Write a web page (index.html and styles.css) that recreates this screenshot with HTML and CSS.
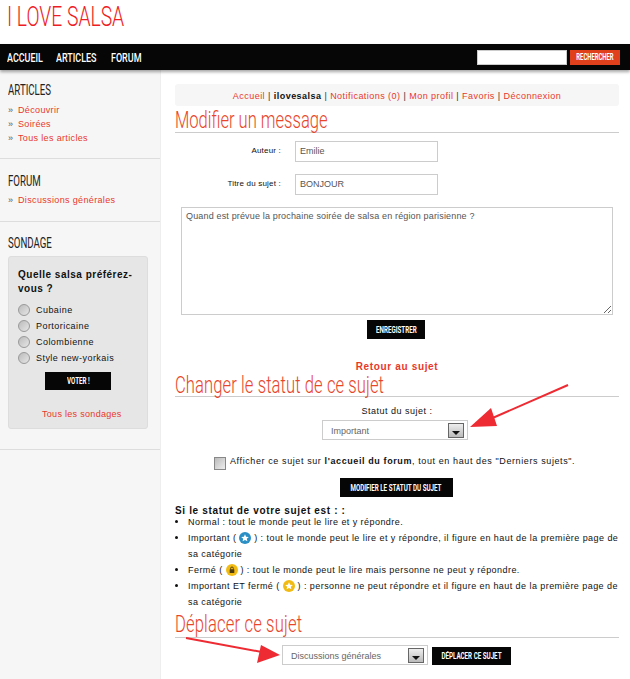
FILE: index.html
```html
<!DOCTYPE html>
<html lang="en">
<head>
  <meta charset="UTF-8" />
  <title>I Love Salsa</title>
  <link rel="stylesheet" href="styles.css">
</head>
<body>
  <header class="top">
    <div class="logo"><span class="narrow">I LOVE SALSA</span></div>
  </header>
  <nav class="nav">
    <a href="#"><span class="narrow">ACCUEIL</span></a>
    <a href="#"><span class="narrow">ARTICLES</span></a>
    <a href="#"><span class="narrow">FORUM</span></a>
    <form class="search">
      <input type="text" />
      <button class="btn" type="button"><span class="narrow">RECHERCHER</span></button>
    </form>
  </nav>
  <div class="page">
    <aside class="side">
      <section class="side-block">
        <h3><span class="narrow">ARTICLES</span></h3>
        <ul>
          <li><a href="#">Découvrir</a></li>
          <li><a href="#">Soirées</a></li>
          <li><a href="#">Tous les articles</a></li>
        </ul>
      </section>
      <section class="side-block forum">
        <h3><span class="narrow">FORUM</span></h3>
        <ul>
          <li><a href="#">Discussions générales</a></li>
        </ul>
      </section>
      <section class="side-block poll">
        <h3><span class="narrow">SONDAGE</span></h3>
        <div class="poll-box">
          <p class="question">Quelle salsa préférez-vous ?</p>
          <label><input type="radio" name="salsa" /> Cubaine</label>
          <label><input type="radio" name="salsa" /> Portoricaine</label>
          <label><input type="radio" name="salsa" /> Colombienne</label>
          <label><input type="radio" name="salsa" /> Style new-yorkais</label>
          <button class="btn vote" type="button"><span class="narrow">VOTER !</span></button>
          <a class="all-polls" href="#">Tous les sondages</a>
        </div>
      </section>
    </aside>
    <main class="main">
      <div class="crumbs">
        <a href="#">Accueil</a> | <b>ilovesalsa</b> | <a href="#">Notifications (0)</a> | <a href="#">Mon profil</a> | <a href="#">Favoris</a> | <a href="#">Déconnexion</a>
      </div>
      <h1><span class="narrow">Modifier un message</span></h1>
      <div class="field first">
        <label>Auteur :</label>
        <input type="text" value="Emilie" />
      </div>
      <div class="field second">
        <label>Titre du sujet :</label>
        <input type="text" value="BONJOUR" />
      </div>
      <textarea class="message">Quand est prévue la prochaine soirée de salsa en région parisienne ?</textarea>
      <div class="center save"><button class="btn" type="button"><span class="narrow">ENREGISTRER</span></button></div>
      <div class="center back"><a href="#">Retour au sujet</a></div>

      <h1 class="status-title"><span class="narrow">Changer le statut de ce sujet</span></h1>
      <div class="center status-label">Statut du sujet :</div>
      <div class="center">
        <div class="select">
          <select><option>Important</option></select>
          <i class="select-btn"></i>
        </div>
      </div>
      <div class="check">
        <input type="checkbox" />
        <span>Afficher ce sujet sur <b>l'accueil du forum</b>, tout en haut des "Derniers sujets".</span>
      </div>
      <div class="center"><button class="btn status-btn" type="button"><span class="narrow">MODIFIER LE STATUT DU SUJET</span></button></div>

      <p class="legend-title">Si le statut de votre sujet est : :</p>
      <ul class="legend">
        <li>Normal : tout le monde peut le lire et y répondre.</li>
        <li>Important (
          <svg class="badge" viewBox="0 0 12 12"><circle cx="6" cy="6" r="6" fill="#2a8fc4"/><path d="M6 2.2l1.1 2.5 2.7.2-2 1.8.6 2.6L6 7.9 3.6 9.3l.6-2.6-2-1.8 2.7-.2z" fill="#fff"/></svg>
          ) : tout le monde peut le lire et y répondre, il figure en haut de la première page de<br>sa catégorie</li>
        <li>Fermé (
          <svg class="badge" viewBox="0 0 12 12"><circle cx="6" cy="6" r="6" fill="#f2bb13"/><rect x="3.7" y="5.3" width="4.6" height="3.6" rx=".5" fill="#4a3a10"/><path d="M4.6 5.5V4.4a1.4 1.4 0 0 1 2.8 0v1.1" fill="none" stroke="#4a3a10" stroke-width=".9"/></svg>
          ) : tout le monde peut le lire mais personne ne peut y répondre.</li>
        <li>Important ET fermé (
          <svg class="badge" viewBox="0 0 12 12"><circle cx="6" cy="6" r="6" fill="#f2bb13"/><path d="M6 2.2l1.1 2.5 2.7.2-2 1.8.6 2.6L6 7.9 3.6 9.3l.6-2.6-2-1.8 2.7-.2z" fill="#fff"/></svg>
          ) : personne ne peut répondre et il figure en haut de la première page de<br>sa catégorie</li>
      </ul>

      <h1 class="move-title"><span class="narrow">Déplacer ce sujet</span></h1>
      <div class="move">
        <div class="select">
          <select><option>Discussions générales</option></select>
          <i class="select-btn"></i>
        </div>
        <button class="btn move-btn" type="button"><span class="narrow">DÉPLACER CE SUJET</span></button>
      </div>
    </main>
  </div>

  <svg class="arrow arrow-status" width="110" height="56" viewBox="0 0 110 56">
    <path d="M104 3L24 38" stroke="#ee2a32" stroke-width="2" fill="none"/>
    <path d="M6 45L27 26l6 18z" fill="#ee2a32"/>
  </svg>
  <svg class="arrow arrow-move" width="110" height="34" viewBox="0 0 110 34">
    <path d="M3 3L84 18" stroke="#ee2a32" stroke-width="2" fill="none"/>
    <path d="M97 20L78 10 74 28z" fill="#ee2a32"/>
  </svg>
</body>
</html>
```

FILE: styles.css
```css
* {
  box-sizing: border-box;
}
body {
  margin: 0;
  height: 679px;
  overflow: hidden;
  position: relative;
  background: white;
  color: #111;
  font-family: "Liberation Sans", Arial, sans-serif;
  font-size: 9px;
  letter-spacing: 0.35px;
}
a {
  color: #e8382a;
  text-decoration: none;
}
ul {
  list-style: none;
  margin: 0;
  padding: 0;
}
.narrow {
  display: inline-block;
  font-family: Roboto, sans-serif;
  white-space: nowrap;
  transform: scaleX(0.69);
  transform-origin: left center;
  letter-spacing: 0;
}
.center {
  text-align: center;
}

/* header */
.top {
  height: 44px;
  padding: 2px 0 0 7px;
}
.logo {
  color: #ee1c25;
  font-size: 28px;
  line-height: 30px;
}
.logo .narrow {
  font-weight: 300;
}
.nav {
  display: flex;
  align-items: center;
  height: 26px;
  padding-left: 7px;
  background: #060606;
  box-shadow: 0 2px 3px rgba(0, 0, 0, 0.35);
  position: relative;
}
.nav a {
  color: white;
  font-size: 13px;
  font-weight: 500;
  width: 49px;
}
.nav a:nth-child(2) {
  width: 55px;
}
.search {
  display: flex;
  gap: 3px;
  margin: 0 10px 0 auto;
}
.search input {
  width: 90px;
  height: 15px;
  border: 1px solid #ccc;
  background: white;
}
.search .btn {
  width: 50px;
  height: 15px;
  background: #e0401c;
  font-size: 8.5px;
}

/* sidebar */
.page {
  display: flex;
  height: 609px;
}
.side {
  width: 161px;
  background: #f6f6f6;
  border-right: 1px solid #eee;
}
.side-block {
  padding: 12px 12px 0 8px;
  height: 89px;
  border-bottom: 1px solid #ddd;
}
.side-block h3 {
  margin: 0 0 5px;
  font-size: 14px;
  font-weight: 400;
  line-height: 16px;
  color: #222;
}
.side-block li {
  line-height: 14px;
  padding-left: 10px;
  position: relative;
}
.side-block li::before {
  content: "»";
  position: absolute;
  left: 0;
  color: #555;
  font-size: 9px;
}
.forum {
  height: 63px;
  padding-top: 14px;
}
.forum h3 {
  margin-bottom: 4px;
}
.poll {
  height: 228px;
  padding-top: 13px;
}
.poll-box {
  height: 173px;
  padding: 11px 9px 0;
  background: #e6e6e6;
  border: 1px solid #ddd;
  border-radius: 3px;
}
.question {
  margin: 0 0 6px;
  font-weight: 700;
  font-size: 10px;
  line-height: 14px;
  letter-spacing: 0.5px;
}
.poll-box label {
  display: flex;
  align-items: center;
  gap: 6px;
  height: 16px;
  letter-spacing: 0.45px;
}
input[type="radio"] {
  appearance: none;
  width: 12px;
  height: 12px;
  margin: 0;
  border: 1px solid #999;
  border-radius: 50%;
  background: linear-gradient(135deg, #bbb, #e6e6e6);
}

/* buttons */
.btn {
  display: inline-flex;
  align-items: center;
  justify-content: center;
  border: none;
  background: #060606;
  color: white;
  font-size: 9px;
  font-weight: 700;
  height: 19px;
  padding: 0;
}
.btn .narrow {
  transform-origin: center;
}
.vote {
  display: flex;
  width: 66px;
  height: 18px;
  margin: 6px auto 0;
}
.all-polls {
  display: block;
  margin-top: 19px;
  padding-left: 24px;
  letter-spacing: 0.3px;
}

/* content */
.main {
  width: 444px;
  margin-left: 14px;
  padding-top: 14px;
}
.crumbs {
  height: 22px;
  line-height: 24px;
  background: #f6f6f6;
  border-radius: 3px;
  text-align: center;
  color: #333;
  letter-spacing: 0.46px;
}
.crumbs b {
  color: #111;
}
h1 {
  margin: 0;
  height: 27px;
  border-bottom: 1px solid #ccc;
  color: #e8452a;
  font-size: 24px;
  font-weight: 300;
  line-height: 28px;
}
.field {
  display: flex;
  align-items: center;
  margin-top: 7px;
  height: 22px;
}
.second {
  margin-top: 11px;
}
.field label {
  width: 106px;
  margin: 0 14px 2px 0;
  text-align: right;
  font-size: 8px;
  letter-spacing: 0.2px;
}
.field input {
  width: 143px;
  height: 21px;
  padding: 0 4px 1px;
  border: 1px solid #ccc;
  font: inherit;
  color: #555;
}
.message {
  display: block;
  width: 432px;
  height: 108px;
  margin: 12px 0 0 6px;
  padding: 3px 4px;
  border: 1px solid #ccc;
  font: inherit;
  letter-spacing: 0.16px;
  color: #555;
}
.save {
  margin-top: 5px;
  padding-right: 2px;
}
.save .btn {
  width: 58px;
}
.back {
  margin-top: 22px;
  line-height: 11px;
  font-size: 10px;
  font-weight: 700;
  letter-spacing: 0.65px;
}
.status-title {
  height: 25px;
  line-height: 26px;
}
.status-title .narrow {
  letter-spacing: 0.15px;
}
.status-label {
  margin-top: 8px;
  line-height: 12px;
  letter-spacing: 0.5px;
}
.select {
  display: inline-block;
  position: relative;
  width: 146px;
  height: 20px;
  margin: 3px 4px 0 0;
  vertical-align: top;
}
.select select {
  appearance: none;
  display: block;
  width: 100%;
  height: 100%;
  padding: 2px 8px 0;
  border: 1px solid #ccc;
  background: white;
  font: inherit;
  color: #666;
}
.select-btn {
  position: absolute;
  right: 4px;
  top: 3px;
  width: 16px;
  height: 15px;
  border: 1px solid #666;
  background: linear-gradient(#eee, #bbb);
}
.select-btn::after {
  content: "";
  position: absolute;
  left: 3px;
  top: 7px;
  border: 4px solid transparent;
  border-top-color: #111;
  border-bottom: none;
}
.check {
  display: flex;
  align-items: flex-start;
  gap: 4px;
  margin-top: 16px;
  padding-left: 39px;
  line-height: 10px;
  letter-spacing: 0.6px;
}
input[type="checkbox"] {
  appearance: none;
  width: 12px;
  height: 13px;
  margin: 1px 0 0;
  border: 1px solid #888;
  background: linear-gradient(135deg, #bbb, #eee);
}
.status-btn {
  width: 113px;
  margin: 8px 0 0 -2px;
}
.legend-title {
  margin: 8px 0 0;
  line-height: 12px;
  font-size: 10px;
  font-weight: 700;
  letter-spacing: 0.65px;
}
.legend {
  margin-top: -3px;
  padding-left: 13px;
  letter-spacing: 0.44px;
}
.legend li {
  line-height: 16px;
  position: relative;
}
.legend li::before {
  content: "";
  position: absolute;
  left: -13px;
  top: 6px;
  width: 3px;
  height: 3px;
  border-radius: 50%;
  background: #111;
}
.badge {
  width: 12px;
  height: 12px;
  vertical-align: -3px;
}
.move-title {
  height: 28px;
  line-height: 28px;
}
.move-title .narrow {
  letter-spacing: 0.25px;
}
.move {
  display: flex;
  align-items: flex-start;
  padding-left: 107px;
  margin-top: 5px;
}
.move .select {
  margin-top: 2px;
}
.move-btn {
  width: 79px;
  height: 18px;
  margin-top: 4px;
}

/* annotation arrows drawn on the screenshot */
.arrow {
  position: absolute;
}
.arrow-status {
  left: 464px;
  top: 382px;
}
.arrow-move {
  left: 183px;
  top: 635px;
}
```
